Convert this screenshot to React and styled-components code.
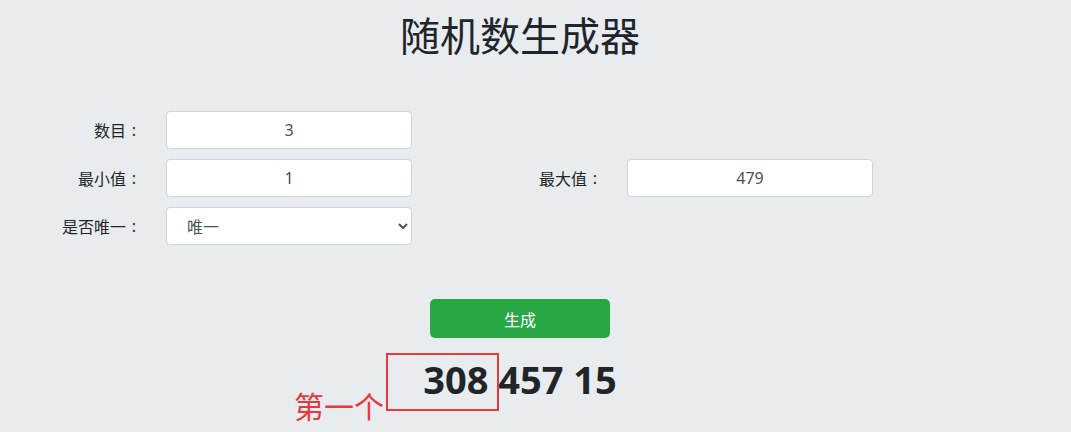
import React, { useState } from 'react';
import styled, { createGlobalStyle } from 'styled-components';

const GlobalStyle = createGlobalStyle`
  body {
    margin: 0;
    background: #e9ecef;
    font-family: "Noto Sans", "Noto Sans CJK SC", sans-serif;
    color: #212529;
  }
`;

const Page = styled.div`
  width: 1040px;
  min-height: 432px;
  box-sizing: border-box;
  padding-top: 10px;
`;

const Title = styled.h1`
  margin: 0;
  text-align: center;
  font-size: 40px;
  font-weight: 400;
  line-height: 1.2;
  font-family: "Noto Sans CJK SC", sans-serif;
`;

const Form = styled.div`
  margin-top: 53px;
  display: grid;
  grid-template-columns: 142px 246px 167px 246px;
  grid-auto-rows: 38px;
  column-gap: 24px;
  row-gap: 10px;
`;

const Label = styled.label`
  display: flex;
  align-items: center;
  justify-content: flex-end;
  font-size: 16px;
  font-family: "Noto Sans CJK SC", sans-serif;
  color: #212529;
`;

const Colon = styled.span`
  display: inline-block;
  width: 16px;
  text-align: center;
  font-family: "Noto Sans", sans-serif;
`;

const Input = styled.input`
  box-sizing: border-box;
  width: 100%;
  height: 38px;
  border: 1px solid #ced4da;
  border-radius: 4px;
  background: #fff;
  text-align: center;
  font-size: 16px;
  font-family: "Noto Sans", sans-serif;
  color: #495057;
  outline: none;
`;

const Select = styled.select`
  box-sizing: border-box;
  width: 100%;
  height: 38px;
  border: 1px solid #ced4da;
  border-radius: 4px;
  background: #fff;
  padding: 0 8px 0 16px;
  font-size: 16px;
  font-family: "Noto Sans CJK SC", sans-serif;
  color: #495057;
  outline: none;
`;

const Actions = styled.div`
  margin-top: 54px;
  display: flex;
  justify-content: center;
`;

const Button = styled.button`
  width: 180px;
  height: 39px;
  border: none;
  border-radius: 5px;
  background: #28a745;
  color: #fff;
  font-size: 16px;
  font-family: "Noto Sans CJK SC", sans-serif;
  cursor: pointer;
`;

const Results = styled.div`
  position: relative;
  margin-top: 19px;
  text-align: center;
  font-size: 38px;
  font-weight: 700;
  line-height: 1.2;
  font-family: "Open Sans", sans-serif;
  color: #212529;
`;

const Marker = styled.div`
  position: absolute;
  left: 386px;
  top: -4px;
  width: 113px;
  height: 58px;
  box-sizing: border-box;
  border: 2px solid #e53b3f;
`;

const Note = styled.div`
  position: absolute;
  left: 294px;
  top: 33px;
  font-size: 30px;
  font-weight: 400;
  line-height: 1;
  font-family: "Noto Sans CJK SC", sans-serif;
  color: #e8383d;
`;

const Field = ({ label }) => (
  <Label>
    {label}
    <Colon>:</Colon>
  </Label>
);

export default function App() {
  const [count, setCount] = useState('3');
  const [min, setMin] = useState('1');
  const [max, setMax] = useState('479');
  const [unique, setUnique] = useState('唯一');
  const [numbers] = useState([308, 457, 15]);

  return (
    <Page>
      <GlobalStyle />
      <Title>随机数生成器</Title>
      <Form>
        <Field label="数目" />
        <Input value={count} onChange={e => setCount(e.target.value)} />
        <div />
        <div />
        <Field label="最小值" />
        <Input value={min} onChange={e => setMin(e.target.value)} />
        <Field label="最大值" />
        <Input value={max} onChange={e => setMax(e.target.value)} />
        <Field label="是否唯一" />
        <Select value={unique} onChange={e => setUnique(e.target.value)}>
          <option>唯一</option>
          <option>不唯一</option>
        </Select>
      </Form>
      <Actions>
        <Button>生成</Button>
      </Actions>
      <Results>
        {numbers.join(' ')}
        <Marker />
        <Note>第一个</Note>
      </Results>
    </Page>
  );
}
